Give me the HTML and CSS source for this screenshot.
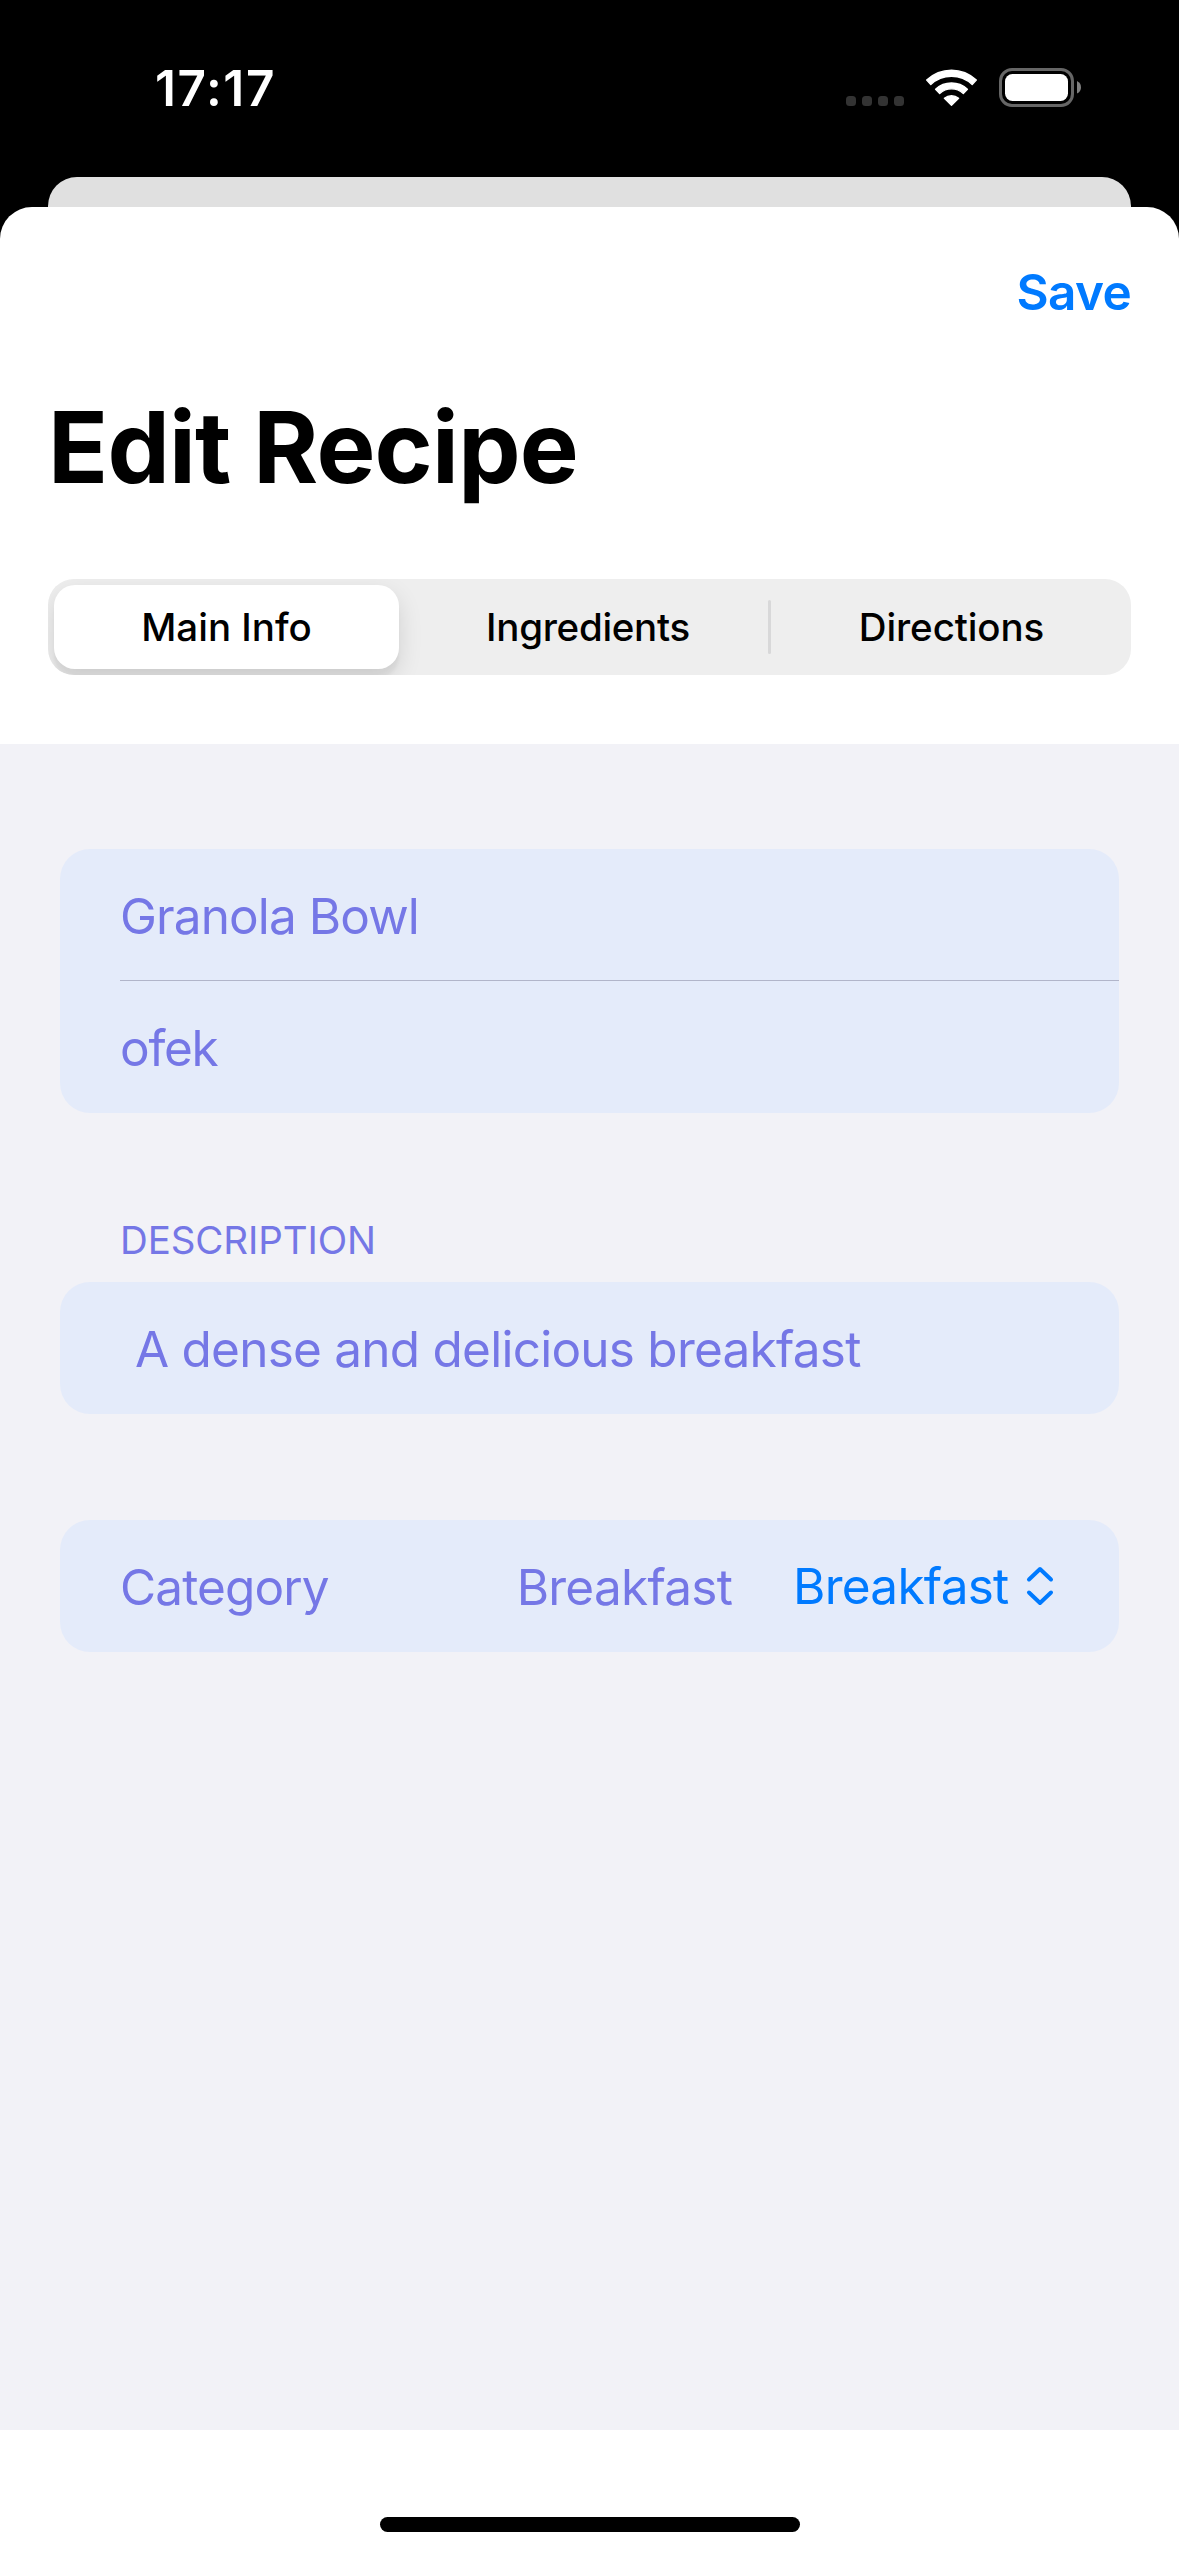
FILE: index.html
```html
<!DOCTYPE html>
<html lang="en">
<head>
<meta charset="utf-8">
<title>Edit Recipe</title>
<link rel="stylesheet" href="styles.css">
</head>
<body>
<div class="screen">
  <header class="status-bar">
    <time class="clock">17:17</time>
    <div class="status-icons">
      <div class="cell-dots"><i></i><i></i><i></i><i></i></div>
      <svg class="wifi" width="53" height="39" viewBox="0 0 53 39" fill="#fff" stroke="#fff" stroke-width="1.4" stroke-linejoin="round">
        <path d="M1.7 12.1A36 36 0 0 1 51.3 12.1L47.2 16.4A30.2 30.2 0 0 0 5.8 16.4Z"/>
        <path d="M10.6 21.2A23.4 23.4 0 0 1 42.4 21.2L38.3 25.4A17.6 17.6 0 0 0 14.7 25.4Z"/>
        <path d="M19.4 30.3A11 11 0 0 1 33.6 30.3L26.5 37.2Z"/>
      </svg>
      <svg class="battery" width="84" height="39" viewBox="0 0 84 39">
        <rect x="1.5" y="1.5" width="72" height="36" rx="11.5" fill="none" stroke="#666" stroke-width="3"/>
        <rect x="6" y="6" width="63" height="27" rx="7.5" fill="#fff"/>
        <path d="M78 13C80.700 14.300 82 16.500 82 19.200C82 21.900 80.700 24.200 78 25.500Z" fill="#808080"/>
      </svg>
    </div>
  </header>
  <div class="back-card"></div>
  <main class="sheet">
    <div class="toolbar"><button class="save">Save</button></div>
    <h1 class="title">Edit Recipe</h1>
    <nav class="segments">
      <span class="segment selected">Main Info</span>
      <span class="segment">Ingredients</span>
      <span class="divider"></span>
      <span class="segment last">Directions</span>
    </nav>
    <form class="form">
      <section class="group">
        <div class="row">Granola Bowl</div>
        <div class="line"></div>
        <div class="row short">ofek</div>
      </section>
      <h2 class="caption">DESCRIPTION</h2>
      <section class="group description">
        <div class="row inset">A dense and delicious breakfast</div>
      </section>
      <section class="group category">
        <div class="row">
          <span class="label">Category</span>
          <span class="value">Breakfast</span>
          <span class="picker">Breakfast
            <svg width="28" height="40" viewBox="0 0 28 40" fill="none" stroke="#007aff" stroke-width="4" stroke-linecap="round" stroke-linejoin="round">
              <path d="M3 13.500L14 3L25 13.500M3 26.500L14 37L25 26.500"/>
            </svg>
          </span>
        </div>
      </section>
    </form>
    <footer class="home-area"><div class="home-indicator"></div></footer>
  </main>
</div>
</body>
</html>
```
FILE: styles.css
```css
* {
  box-sizing: border-box;
}

body {
  margin: 0;
  background: #000;
  font-family: Inter, "Liberation Sans", sans-serif;
}

.screen {
  width: 1179px;
  height: 2556px;
  display: flex;
  flex-direction: column;
  overflow: hidden;
  background: #000;
}

/* Status bar */
.status-bar {
  height: 177px;
  padding: 58px 96px 0 155px;
  display: flex;
  align-items: flex-start;
  justify-content: space-between;
}

.clock {
  color: #fff;
  font-size: 49.5px;
  font-weight: 600;
  line-height: 60px;
  letter-spacing: 1.6px;
}

.status-icons {
  display: flex;
  align-items: flex-end;
  padding-top: 10px;
}

.cell-dots {
  display: flex;
  gap: 6px;
  margin: 0 21px 1px 0;
}

.cell-dots i {
  width: 10px;
  height: 10px;
  border-radius: 3.5px;
  background: #333;
}

.wifi {
  margin-right: 21px;
}

/* Sheet and the card behind it */
.back-card {
  height: 30px;
  margin: 0 48px;
  background: #e0e0e0;
  border-radius: 29px 29px 0 0;
}

.sheet {
  flex: 1;
  display: flex;
  flex-direction: column;
  background: #fff;
  border-radius: 32px 32px 0 0;
}

.toolbar {
  height: 170px;
  padding: 55px 48px 0 0;
  display: flex;
  justify-content: flex-end;
  align-items: flex-start;
}

.save {
  padding: 0;
  border: 0;
  background: none;
  color: #007aff;
  font: 600 49.5px/60px Inter, "Liberation Sans", sans-serif;
  letter-spacing: -0.7px;
}

.title {
  margin: 0;
  padding: 10px 48px 0;
  height: 202px;
  font-size: 99px;
  font-weight: 700;
  line-height: 120px;
  letter-spacing: -0.75px;
}

.segments {
  display: flex;
  align-items: center;
  height: 96px;
  margin: 0 48px 69px;
  padding: 0 6px;
  border-radius: 26px;
  background: #eee;
  overflow: hidden;
}

.segment {
  flex: 1;
  height: 84px;
  color: #000;
  font-size: 38.5px;
  font-weight: 450;
  line-height: 84px;
  letter-spacing: -0.3px;
  text-align: center;
}

.segment.selected {
  flex: 0 0 345px;
  margin-right: 9px;
  font-weight: 500;
  letter-spacing: 0;
  border-radius: 21px;
  background: #fff;
  box-shadow: 0 9px 24px rgba(0, 0, 0, 0.12), 0 9px 3px rgba(0, 0, 0, 0.04);
}

.segment.last {
  flex: 0 0 354px;
  padding-left: 7px;
  letter-spacing: -0.1px;
}

.divider {
  width: 3px;
  height: 54px;
  border-radius: 1.5px;
  background: #d8d8d9;
}

/* Form */
.form {
  height: 1686px;
  padding: 105px 60px 0;
  background: #f2f2f7;
}

.group {
  border-radius: 30px;
  background: #e4ebfa;
  color: #7577e6;
}

.row {
  display: flex;
  align-items: center;
  height: 132px;
  padding: 2px 60px 0;
  font-size: 49.5px;
  line-height: 60px;
  letter-spacing: -0.9px;
  white-space: nowrap;
}

.row.inset {
  padding-left: 75px;
  letter-spacing: -0.76px;
}

.row.short {
  letter-spacing: -1.3px;
}

.line {
  height: 1px;
  margin: -1px 0 0 60px;
  background: #b1b5c9;
}

.caption {
  margin: 103px 0 18px 60px;
  color: #7577e6;
  font-size: 38.5px;
  font-weight: 400;
  line-height: 48px;
  letter-spacing: -0.1px;
}

.category {
  margin-top: 106px;
}

.label {
  flex: 1;
}

.value,
.picker {
  letter-spacing: -0.75px;
}

.picker {
  display: flex;
  align-items: center;
  gap: 17px;
  margin: -2px 5.5px 0 61px;
  color: #007aff;
}

.home-area {
  flex: 1;
  display: flex;
  justify-content: center;
  align-items: flex-end;
  padding: 0 0 24px 1px;
}

.home-indicator {
  width: 420px;
  height: 15px;
  border-radius: 7.5px;
  background: #000;
}
```
